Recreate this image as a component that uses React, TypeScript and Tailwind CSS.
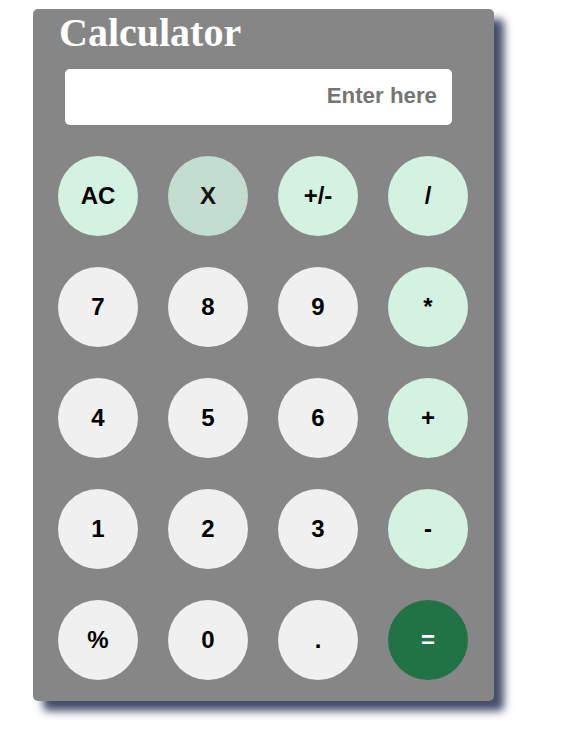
import React from "react";

const rows: { label: string; kind: "op" | "num" | "x" | "eq" }[][] = [
  [
    { label: "AC", kind: "op" },
    { label: "X", kind: "x" },
    { label: "+/-", kind: "op" },
    { label: "/", kind: "op" },
  ],
  [
    { label: "7", kind: "num" },
    { label: "8", kind: "num" },
    { label: "9", kind: "num" },
    { label: "*", kind: "op" },
  ],
  [
    { label: "4", kind: "num" },
    { label: "5", kind: "num" },
    { label: "6", kind: "num" },
    { label: "+", kind: "op" },
  ],
  [
    { label: "1", kind: "num" },
    { label: "2", kind: "num" },
    { label: "3", kind: "num" },
    { label: "-", kind: "op" },
  ],
  [
    { label: "%", kind: "num" },
    { label: "0", kind: "num" },
    { label: ".", kind: "num" },
    { label: "=", kind: "eq" },
  ],
];

const kindClass: Record<string, string> = {
  op: "bg-[#d4f2e1] text-black",
  num: "bg-[#f0f0f0] text-black",
  x: "bg-[#c3ddd0] text-[#111]",
  eq: "bg-[#217346] text-white",
};

export default function App() {
  return (
    <div className="w-[566px] h-[732px] bg-white pl-[33px] pt-[9px]">
      <div className="w-[461px] h-[692px] bg-[#868686] rounded-[5px] shadow-[10px_10px_8px_rgba(52,62,92,0.92)] flex flex-col">
        <div
          className="pl-[26px] pt-[2px] text-[40px] leading-[44px] font-bold text-white"
          style={{ fontFamily: '"Liberation Serif", "Times New Roman", serif' }}
        >
          Calculator
        </div>
        <div className="ml-[32px] mt-[14px] w-[387px] h-[56px] bg-white rounded-[5px] flex items-center justify-end pr-[15px] pb-[2px]">
          <span
            className="text-[22.3px] font-bold text-[#757575]"
            style={{ fontFamily: '"Liberation Sans", Arial, sans-serif' }}
          >
            Enter here
          </span>
        </div>
        <div className="mt-[31px] pl-[25px] grid grid-cols-[repeat(4,80px)] gap-x-[30px] gap-y-[31px]">
          {rows.flat().map((b, i) => (
            <div
              key={i}
              className={`w-[80px] h-[80px] rounded-full flex items-center justify-center text-[24px] font-bold ${kindClass[b.kind]}`}
              style={{ fontFamily: '"Liberation Sans", Arial, sans-serif' }}
            >
              {b.label}
            </div>
          ))}
        </div>
      </div>
    </div>
  );
}
